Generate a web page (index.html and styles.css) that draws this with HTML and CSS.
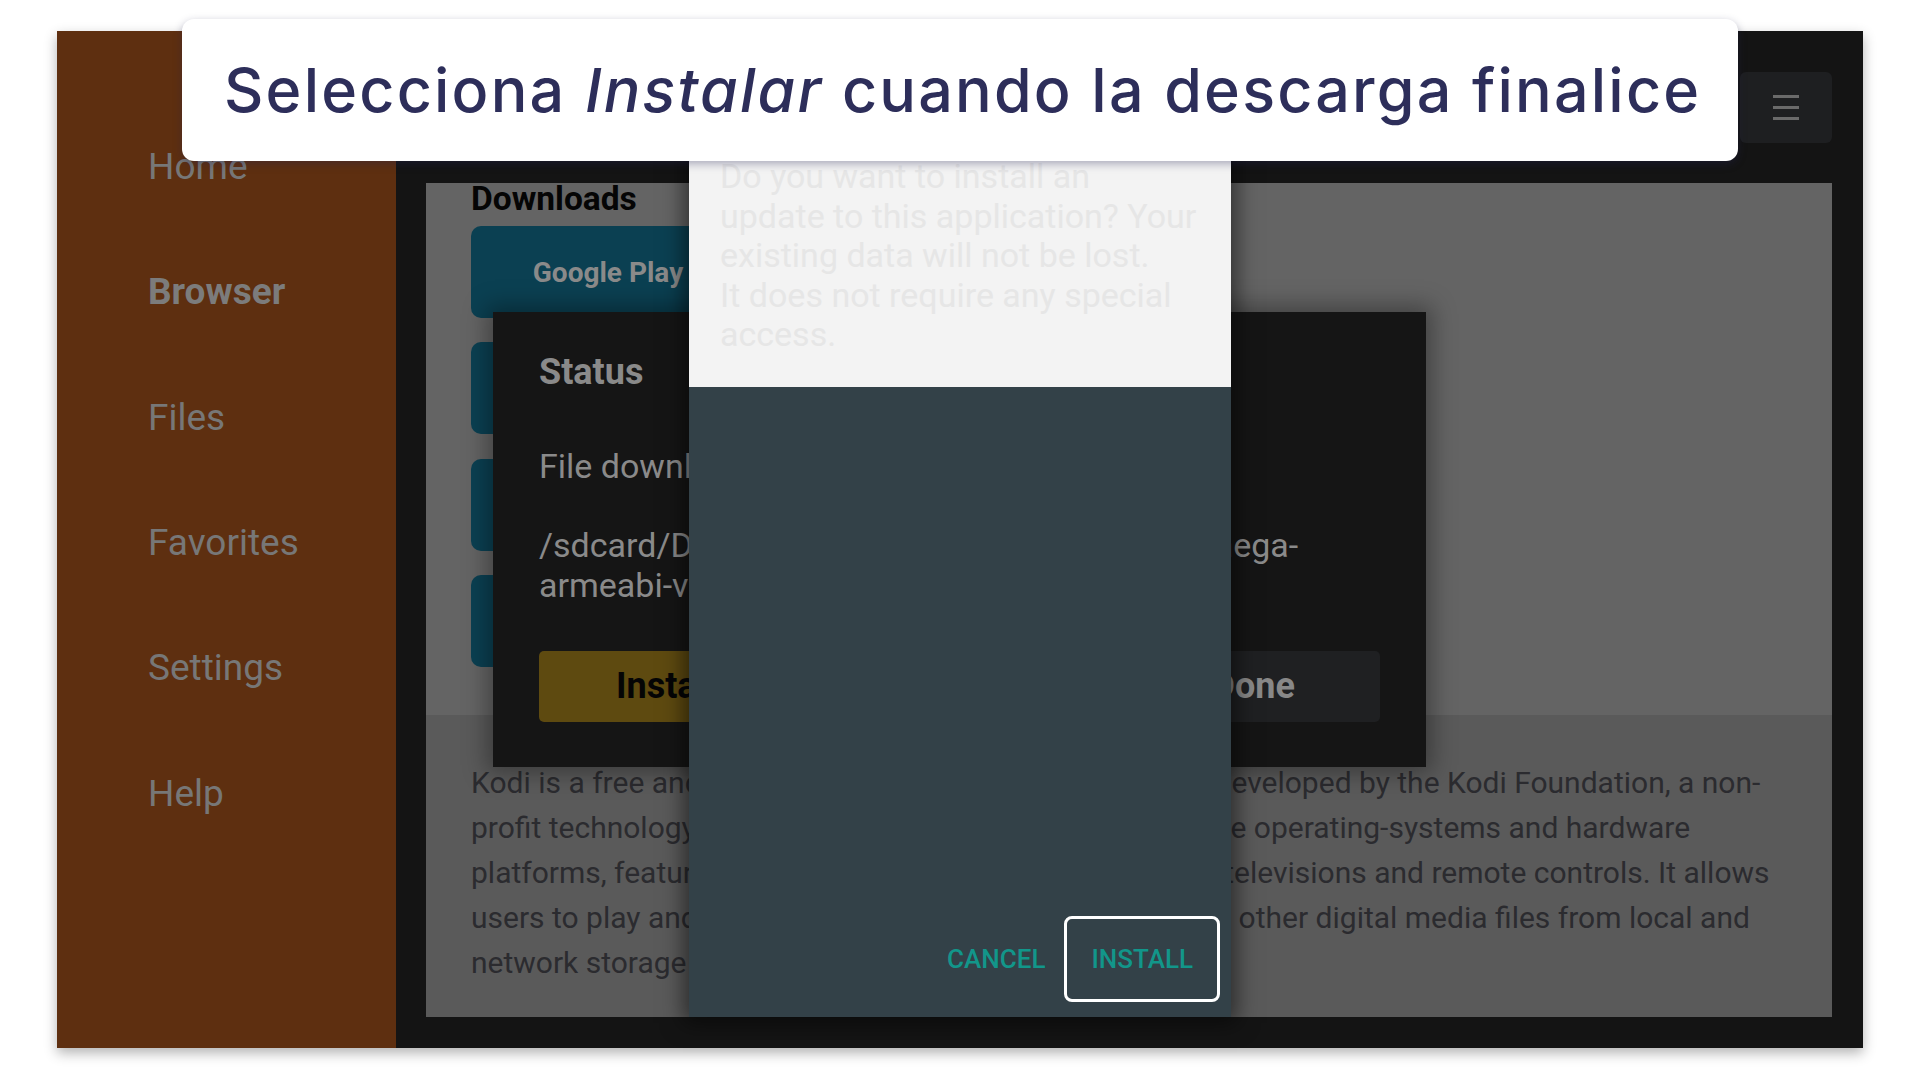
FILE: index.html
```html
<!DOCTYPE html>
<html lang="es">
<head>
    <meta charset="UTF-8">
    <meta name="viewport" content="width=device-width, initial-scale=1.0">
    <title>Selecciona Instalar</title>
    <link rel="stylesheet" href="styles.css">
</head>
<body>
    <div class="page">
        <div class="frame">
            <aside class="sidebar">
                <div class="nav-item">Home</div>
                <div class="nav-item active">Browser</div>
                <div class="nav-item">Files</div>
                <div class="nav-item">Favorites</div>
                <div class="nav-item">Settings</div>
                <div class="nav-item">Help</div>
            </aside>

            <main class="main">
                <div class="topbar">
                    <div class="menu-btn">
                        <span></span>
                        <span></span>
                        <span></span>
                    </div>
                </div>

                <section class="panel">
                    <div class="panel-top">
                        <h2 class="panel-title">Downloads</h2>
                        <div class="shortcuts">
                            <div class="shortcut">Google Play</div>
                            <div class="shortcut"></div>
                            <div class="shortcut"></div>
                            <div class="shortcut"></div>
                        </div>
                    </div>
                    <div class="panel-bottom">
                        <p class="about">Kodi is a free and open-source media player application developed by the Kodi Foundation, a non-profit technology consortium. Kodi is available for multiple operating-systems and hardware platforms, featuring a 10-foot user interface for use with televisions and remote controls. It allows users to play and view most videos, music, podcasts, and other digital media files from local and network storage media and the internet.</p>
                    </div>
                </section>
            </main>

            <!-- downloader status popup -->
            <div class="status-dialog">
                <div class="status-title">Status</div>
                <div class="status-msg">File downloaded successfully.</div>
                <div class="status-path">/sdcard/Download/Downloader/kodi-21.0-Omega-armeabi-v7a.apk</div>
                <div class="status-actions">
                    <div class="status-btn btn-yellow">Install</div>
                    <div class="status-btn btn-dark">Delete</div>
                    <div class="status-btn btn-dark">Done</div>
                </div>
            </div>

            <!-- android package installer -->
            <div class="install-dialog">
                <div class="install-body">
                    Do you want to install an<br>
                    update to this application? Your<br>
                    existing data will not be lost.<br>
                    It does not require any special<br>
                    access.
                </div>
                <div class="install-footer">
                    <div class="dlg-btn btn-cancel">CANCEL</div>
                    <div class="dlg-btn btn-install">INSTALL</div>
                </div>
            </div>
        </div>
    </div>

    <div class="caption">Selecciona&nbsp;<em>Instalar</em>&nbsp;cuando la descarga finalice</div>
</body>
</html>
```

FILE: styles.css
```css
body {
    margin: 0;
    width: 1919px;
    height: 1079px;
    background: #fff;
    font-family: Roboto, "Liberation Sans", sans-serif;
    overflow: hidden;
    position: relative;
}

.page {
    padding: 31px 0 0 57px;
}

.frame {
    position: relative;
    display: flex;
    width: 1806px;
    height: 1017px;
    background: #141414;
    box-shadow: 0 5px 12px rgba(0,0,0,0.3);
}

/* left navigation */
.sidebar {
    width: 339px;
    flex-shrink: 0;
    background: #5e2f10;
    padding-top: 73px;
    box-sizing: border-box;
}

.nav-item {
    height: 125.3px;
    display: flex;
    align-items: center;
    padding-left: 91px;
    font-size: 37px;
    color: #777;
}

.nav-item.active {
    font-weight: 700;
    color: #7c7c7c;
}

.main {
    flex: 1;
    display: flex;
    flex-direction: column;
    padding: 41px 31px 31px 30px;
    background: #141414;
}

.topbar {
    display: flex;
    justify-content: flex-end;
    margin-bottom: 40px;
}

.menu-btn {
    width: 92px;
    height: 71px;
    background: #1e1f21;
    border-radius: 6px;
    display: flex;
    flex-direction: column;
    align-items: center;
    justify-content: center;
    gap: 8px;
}

.menu-btn span {
    width: 26px;
    height: 3px;
    background: #6a6a6a;
}

.panel {
    flex: 1;
    display: flex;
    flex-direction: column;
    background: #646464;
}

.panel-top {
    height: 532px;
    padding-left: 45px;
    box-sizing: border-box;
    flex-shrink: 0;
}

.panel-title {
    margin: -2px 0 9px;
    font-size: 33.5px;
    line-height: 36px;
    font-weight: 700;
    color: #050505;
}

.shortcuts {
    display: flex;
    flex-direction: column;
    gap: 24.3px;
}

.shortcut {
    width: 274px;
    height: 92px;
    border-radius: 10px;
    background: #0b4052;
    color: #8a8a8a;
    font-size: 28px;
    font-weight: 700;
    display: flex;
    align-items: center;
    justify-content: center;
}

.panel-bottom {
    flex: 1;
    background: #5a5a5a;
    padding: 45px 45px 0;
}

.about {
    margin: 0;
    font-size: 30px;
    line-height: 45px;
    color: #2b2b2f;
}

/* status popup */
.status-dialog {
    position: absolute;
    left: 436px;
    top: 281px;
    width: 933px;
    height: 455px;
    box-sizing: border-box;
    padding: 42px 46px 0;
    background: #151515;
    box-shadow: 0 0 22px 6px rgba(0,0,0,0.35);
    color: #8a8a8a;
}

.status-title {
    font-size: 36px;
    line-height: 36px;
    font-weight: 700;
}

.status-msg {
    margin-top: 56px;
    font-size: 34px;
    line-height: 40px;
}

.status-path {
    margin-top: 39px;
    font-size: 34px;
    line-height: 40px;
}

.status-actions {
    display: flex;
    gap: 40px;
    margin-top: 45.5px;
}

.status-btn {
    flex: 1;
    height: 71px;
    border-radius: 5px;
    display: flex;
    align-items: center;
    justify-content: center;
    font-size: 36px;
    font-weight: 700;
}

.btn-yellow {
    background: #5e4a10;
    color: #050505;
}

.btn-dark {
    background: #1f2022;
    color: #888;
}

/* installer */
.install-dialog {
    position: absolute;
    left: 632px;
    top: 109px;
    width: 542px;
    height: 877px;
    display: flex;
    flex-direction: column;
    box-shadow: 0 0 20px 6px rgba(0,0,0,0.5);
}

.install-body {
    height: 247px;
    flex-shrink: 0;
    box-sizing: border-box;
    padding: 17px 20px 0 31px;
    background: #f3f3f3;
    color: #e6e6e6;
    font-size: 34px;
    line-height: 39.5px;
    white-space: nowrap;
}

.install-footer {
    flex: 1;
    background: #334148;
    display: flex;
    justify-content: flex-end;
    align-items: flex-end;
    padding: 0 11px 15px 0;
}

.dlg-btn {
    height: 86px;
    box-sizing: border-box;
    display: flex;
    align-items: center;
    font-size: 26px;
    font-weight: 500;
    color: #12968a;
}

.btn-cancel {
    margin-right: 19px;
}

.btn-install {
    padding: 0 24px;
    border: 3px solid #fff;
    border-radius: 8px;
}

/* caption card on top */
.caption {
    position: absolute;
    left: 182px;
    top: 19px;
    width: 1556px;
    height: 142px;
    box-sizing: border-box;
    padding-left: 42px;
    display: flex;
    align-items: center;
    background: #fff;
    border-radius: 12px;
    box-shadow: 0 3px 8px rgba(35,35,80,0.35);
    font-family: Inter, "Noto Sans", sans-serif;
    font-size: 61px;
    font-weight: 500;
    letter-spacing: 2.2px;
    color: #2d2e5a;
    white-space: nowrap;
}

.caption em {
    font-style: italic;
}
```
